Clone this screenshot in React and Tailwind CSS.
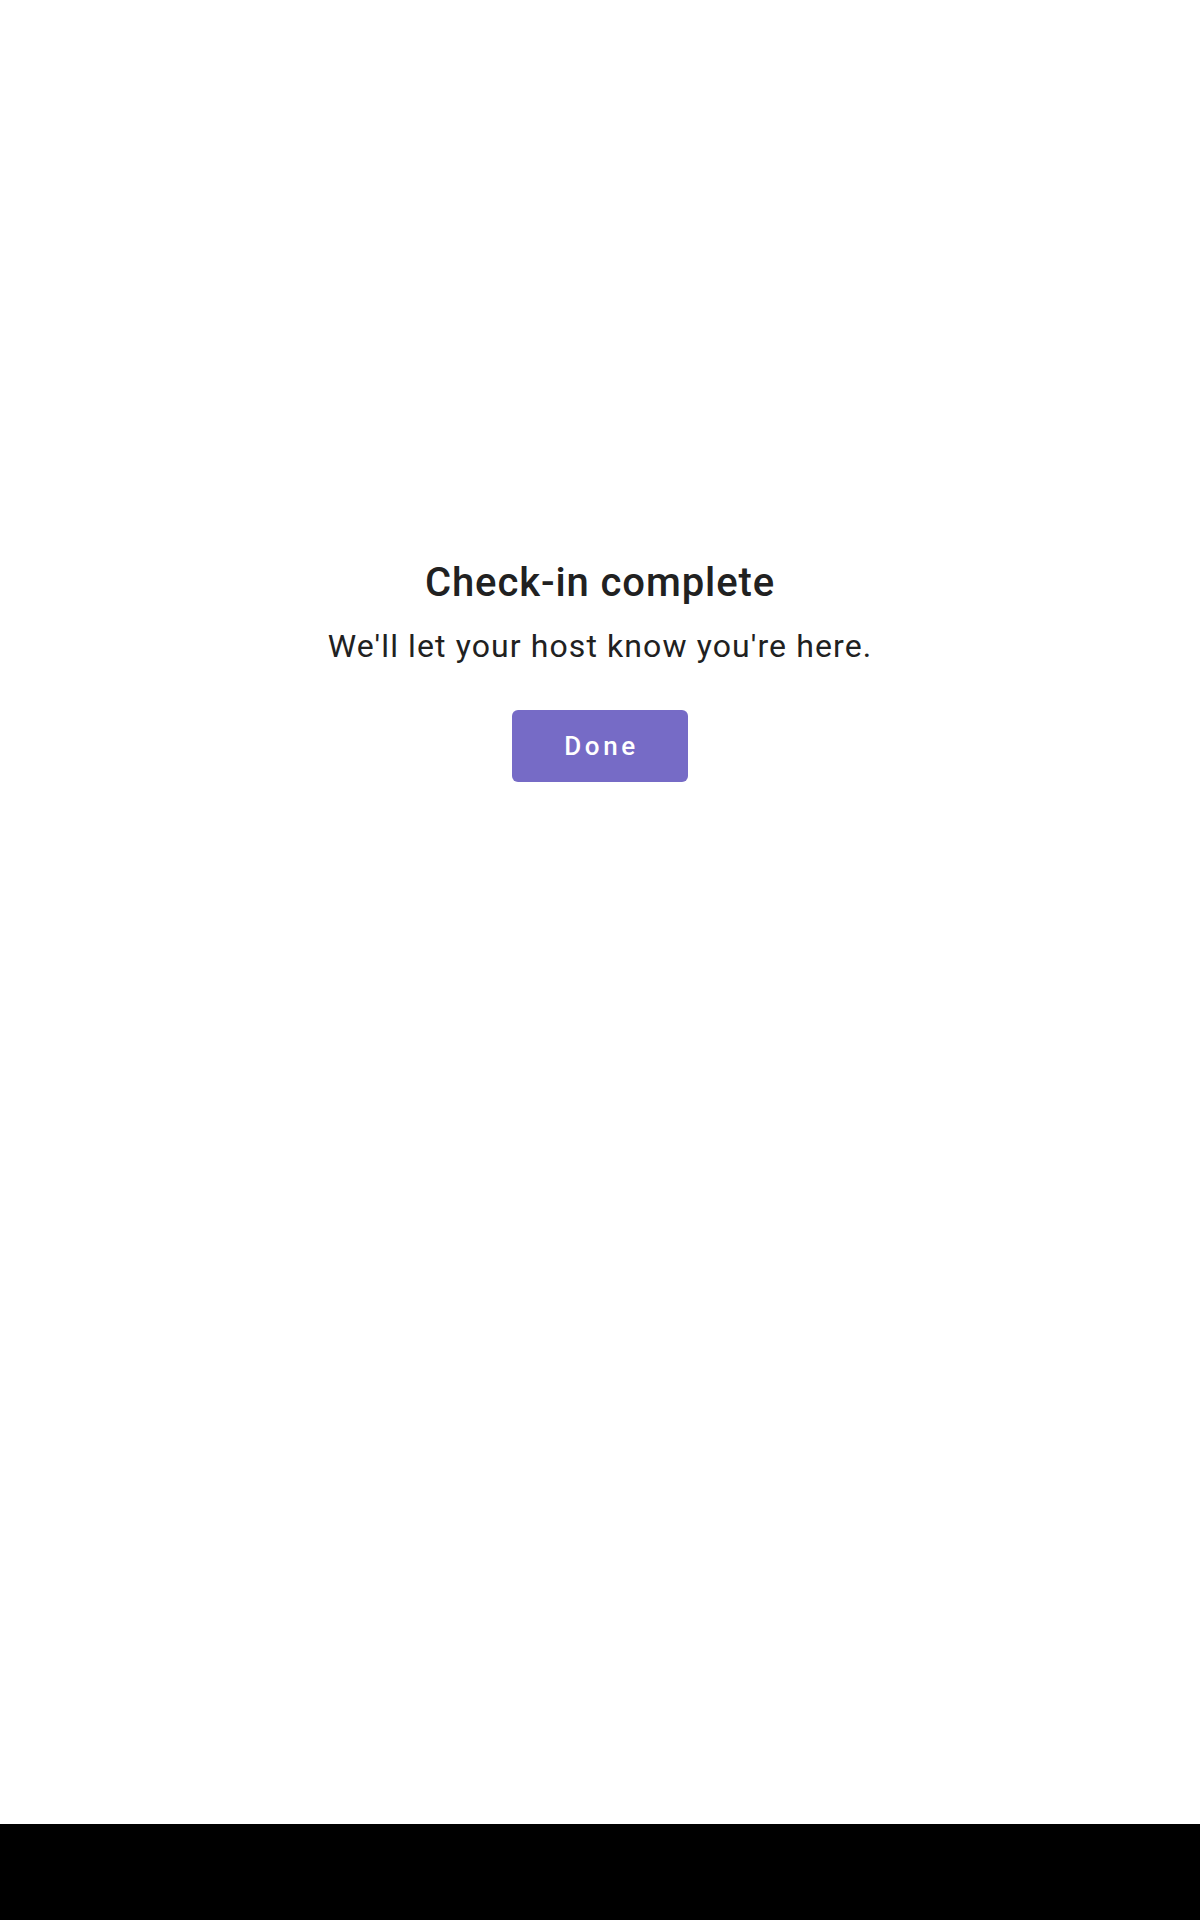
export default function App() {
  return (
    <div className="w-[1200px] h-[1920px] flex flex-col bg-white" style={{ fontFamily: "Roboto, 'Noto Sans', sans-serif" }}>
      <div className="flex-1 flex flex-col items-center pt-[559px]">
        <h1 className="text-[40px] leading-[48px] font-medium text-[#212121] tracking-[0.9px]">Check-in complete</h1>
        <p className="mt-[19px] text-[32px] leading-[40px] text-[#212121] tracking-[1.1px]">We'll let your host know you're here.</p>
        <button className="mt-[44px] w-[176px] h-[72px] rounded-[6px] bg-[#766bc6] text-white text-[26px] font-medium tracking-[3.6px] pl-[3px]">Done</button>
      </div>
      <div className="h-[96px] bg-black" />
    </div>
  );
}
